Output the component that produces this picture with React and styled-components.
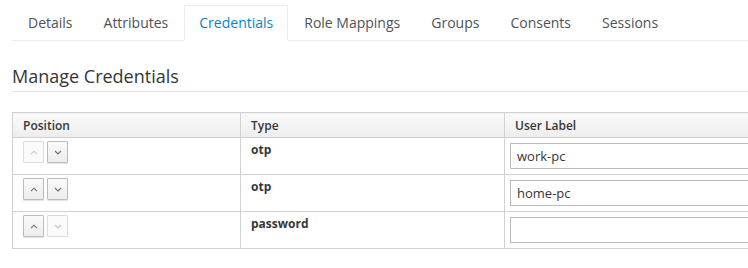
import React from "react";
import styled, { createGlobalStyle } from "styled-components";

const Global = createGlobalStyle`
  html, body { margin: 0; padding: 0; background: #fff; overflow: hidden; }
  body { font-family: "Open Sans", "Noto Sans", sans-serif; color: #363636; }
`;

const Page = styled.div`
  padding: 5px 0 0 12px;
  width: 900px;
`;

const Tabs = styled.ul`
  list-style: none;
  margin: 0;
  padding: 0 0 0 1px;
  display: flex;
  border-bottom: 1px solid #ededed;
`;

const Tab = styled.li`
  padding: 0 14px 1px;
  margin-right: 1px;
  height: 33px;
  display: flex;
  align-items: center;
  font-size: 14px;
  color: ${(p) => (p.$active ? "#0088ce" : "#4d5258")};
  border: 1px solid ${(p) => (p.$active ? "#ededed" : "transparent")};
  border-bottom: 1px solid ${(p) => (p.$active ? "#fff" : "transparent")};
  margin-bottom: -1px;
  background: ${(p) => (p.$active ? "#fff" : "transparent")};
`;

const Heading = styled.h1`
  margin: 23px 0 0;
  font-size: 18px;
  font-weight: 400;
  color: #363636;
  line-height: 24px;
  padding-bottom: 3px;
  border-bottom: 1px solid #e5e5e5;
`;

const Table = styled.table`
  margin-top: 20px;
  border-collapse: collapse;
  width: 860px;
  font-size: 12px;
  table-layout: fixed;
`;

const Th = styled.th`
  box-sizing: border-box;
  text-align: left;
  font-weight: 600;
  color: #363636;
  height: 25px;
  padding: 0 10px;
  border: 1px solid #d1d1d1;
  background: linear-gradient(#fafafa, #ededed);
  width: ${(p) => p.$w};
`;

const Td = styled.td`
  border: 1px solid #d1d1d1;
  height: 36px;
  padding: ${(p) => p.$pad || "3px 10px"};
  vertical-align: top;
  box-sizing: border-box;
`;

const TypeText = styled.span`
  display: block;
  font-weight: 700;
  font-size: 12px;
  color: #363636;
`;

const BtnGroup = styled.div`
  display: flex;
  gap: 3px;
`;

const ArrowBtn = styled.button`
  width: 21px;
  height: 22px;
  padding: 0;
  display: flex;
  align-items: center;
  justify-content: center;
  border: 1px solid ${(p) => (p.disabled ? "#dcdcdc" : "#bbb")};
  border-radius: 1px;
  background: ${(p) => (p.disabled ? "#fafafa" : "linear-gradient(#fafafa, #ededed)")};
  box-shadow: ${(p) => (p.disabled ? "none" : "0 1px 1px rgba(3,3,3,0.12)")};
  color: ${(p) => (p.disabled ? "#c4c4c4" : "#6e6e6e")};
  cursor: pointer;
`;

const Input = styled.input`
  display: block;
  width: 100%;
  box-sizing: border-box;
  height: 26px;
  border: 1px solid #bbb;
  padding: 2px 6px;
  font-family: "Open Sans", sans-serif;
  font-size: 13px;
  color: #363636;
  outline: none;
`;

const Chevron = ({ up }) => (
  <svg width="8" height="5" viewBox="0 0 8 5">
    <path
      d={up ? "M1 4.2 L4 1.2 L7 4.2" : "M1 1 L4 4 L7 1"}
      fill="none"
      stroke="currentColor"
      strokeWidth="1.1"
    />
  </svg>
);

const rows = [
  { type: "otp", label: "work-pc", upOff: true, downOff: false },
  { type: "otp", label: "home-pc", upOff: false, downOff: false },
  { type: "password", label: "", upOff: false, downOff: true },
];

const tabs = ["Details", "Attributes", "Credentials", "Role Mappings", "Groups", "Consents", "Sessions"];

export default function App() {
  return (
    <>
      <Global />
      <Page>
        <Tabs>
          {tabs.map((t) => (
            <Tab key={t} $active={t === "Credentials"}>{t}</Tab>
          ))}
        </Tabs>
        <Heading>Manage Credentials</Heading>
        <Table>
          <thead>
            <tr>
              <Th $w="228px">Position</Th>
              <Th $w="264px">Type</Th>
              <Th>User Label</Th>
            </tr>
          </thead>
          <tbody>
            {rows.map((r, i) => (
              <tr key={i}>
                <Td>
                  <BtnGroup>
                    <ArrowBtn disabled={r.upOff}><Chevron up /></ArrowBtn>
                    <ArrowBtn disabled={r.downOff}><Chevron /></ArrowBtn>
                  </BtnGroup>
                </Td>
                <Td>
                  <TypeText>{r.type}</TypeText>
                </Td>
                <Td $pad="5px 5px">
                  <Input defaultValue={r.label} />
                </Td>
              </tr>
            ))}
          </tbody>
        </Table>
      </Page>
    </>
  );
}
